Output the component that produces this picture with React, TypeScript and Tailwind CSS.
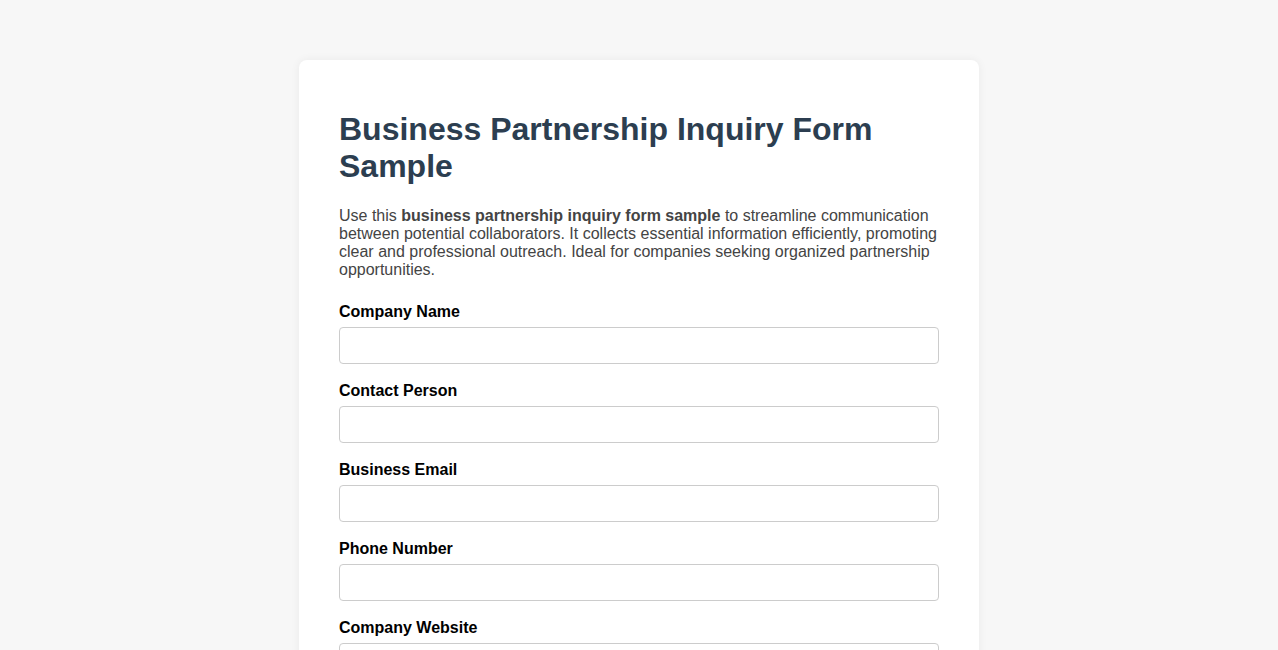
import * as React from 'react';

const fields = [
  { label: 'Company Name', type: 'text' },
  { label: 'Contact Person', type: 'text' },
  { label: 'Business Email', type: 'email' },
  { label: 'Phone Number', type: 'tel' },
  { label: 'Company Website', type: 'url' },
  { label: 'Partnership Type', type: 'text' },
];

export default function App() {
  return (
    <div className="min-h-screen bg-[#f7f7f7] pt-[60px] pb-10 font-['Liberation_Sans',Arial,sans-serif]">
      <main className="mx-auto w-[680px] rounded-lg bg-white px-10 pt-[51px] pb-10 shadow-[0_0_10px_rgba(0,0,0,0.06)]">
        <h1 className="text-[32px] leading-[37px] font-bold text-[#2c3e50]">
          Business Partnership Inquiry Form Sample
        </h1>
        <p className="mt-[22px] text-base leading-[18px] text-[#444]">
          Use this <strong>business partnership inquiry form sample</strong> to
          streamline communication between potential collaborators. It collects
          essential information efficiently, promoting clear and professional
          outreach. Ideal for companies seeking organized partnership
          opportunities.
        </p>
        <form className="mt-6">
          {fields.map((f) => (
            <div key={f.label} className="mb-[18px]">
              <label className="mb-[6px] block text-base leading-[18px] font-bold text-black">
                {f.label}
              </label>
              <input
                type={f.type}
                className="block h-[37px] w-full rounded-[4px] border border-[#ccc] px-2 text-sm outline-none"
              />
            </div>
          ))}
        </form>
      </main>
    </div>
  );
}
